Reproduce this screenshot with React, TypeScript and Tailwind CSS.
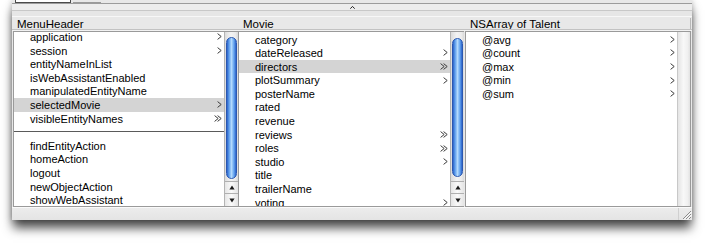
import React from "react";

type Arrow = "one" | "many" | undefined;
type Item = { label?: string; arrow?: Arrow; selected?: boolean; sep?: boolean };

function Chevron({ kind }: { kind: Arrow }) {
  if (kind === "one")
    return (
      <svg width="5" height="7" viewBox="0 0 5 7" className="block">
        <path d="M0.6 0.6 L4.2 3.5 L0.6 6.4" fill="none" stroke="#3a3a3a" strokeWidth="1" />
      </svg>
    );
  if (kind === "many")
    return (
      <svg width="8" height="7" viewBox="0 0 8 7" className="block">
        <path d="M0.6 0.6 L4.2 3.5 L0.6 6.4 M3.6 0.6 L7.2 3.5 L3.6 6.4" fill="none" stroke="#3a3a3a" strokeWidth="1" />
      </svg>
    );
  return null;
}

function Row({ item }: { item: Item }) {
  if (item.sep)
    return (
      <div className="h-[13.6px] flex items-center">
        <div className="h-[1px] w-full bg-[#5a5a5a]" />
      </div>
    );
  return (
    <div
      className={`h-[13.6px] leading-[13.6px] flex items-center justify-between pl-[16px] pr-[2px] whitespace-nowrap ${
        item.selected ? "bg-[#d4d4d4]" : ""
      }`}
    >
      <span className="mt-[2px]">{item.label}</span>
      <Chevron kind={item.arrow} />
    </div>
  );
}

function Scroller({ thumbTop, thumbHeight }: { thumbTop: string; thumbHeight: string }) {
  return (
    <div className="w-[14px] h-full flex flex-col border-l border-[#b4b4b4] bg-[linear-gradient(to_right,#dcdcdc,#f4f4f4_45%,#ececec_80%,#dadada)]">
      <div className={`${thumbTop} ${thumbHeight} mx-auto w-[11px] rounded-full border border-[#2a57b0] bg-[linear-gradient(to_right,#2c62c8,#5b9cec_22%,#b3dafd_50%,#62a2ee_78%,#2c62c8)]`} />
      <div className="flex-1" />
      <div className="h-[12px] border-t border-[#b0b0b0] flex items-center justify-center bg-[linear-gradient(to_right,#e6e6e6,#fafafa_50%,#e4e4e4)]">
        <svg width="6" height="5" viewBox="0 0 6 5"><path d="M3 0.5 L5.6 4.5 L0.4 4.5 Z" fill="#1a1a1a" /></svg>
      </div>
      <div className="h-[13px] border-t border-[#b0b0b0] flex items-center justify-center bg-[linear-gradient(to_right,#e6e6e6,#fafafa_50%,#e4e4e4)]">
        <svg width="6" height="5" viewBox="0 0 6 5"><path d="M0.4 0.5 L5.6 0.5 L3 4.5 Z" fill="#1a1a1a" /></svg>
      </div>
    </div>
  );
}

const col1: Item[] = [
  { label: "application", arrow: "one" },
  { label: "session", arrow: "one" },
  { label: "entityNameInList" },
  { label: "isWebAssistantEnabled" },
  { label: "manipulatedEntityName" },
  { label: "selectedMovie", arrow: "one", selected: true },
  { label: "visibleEntityNames", arrow: "many" },
  { sep: true },
  { label: "findEntityAction" },
  { label: "homeAction" },
  { label: "logout" },
  { label: "newObjectAction" },
  { label: "showWebAssistant" },
];

const col2: Item[] = [
  { label: "category" },
  { label: "dateReleased", arrow: "one" },
  { label: "directors", arrow: "many", selected: true },
  { label: "plotSummary", arrow: "one" },
  { label: "posterName" },
  { label: "rated" },
  { label: "revenue" },
  { label: "reviews", arrow: "many" },
  { label: "roles", arrow: "many" },
  { label: "studio", arrow: "one" },
  { label: "title" },
  { label: "trailerName" },
  { label: "voting", arrow: "one" },
];

const col3: Item[] = [
  { label: "@avg", arrow: "one" },
  { label: "@count", arrow: "one" },
  { label: "@max", arrow: "one" },
  { label: "@min", arrow: "one" },
  { label: "@sum", arrow: "one" },
];

export default function App() {
  return (
    <div className="w-[705px] h-[243px] bg-white overflow-hidden font-['Liberation_Sans',Arial,sans-serif] text-[11px] text-black">
      <div className="ml-[12px] w-[680px] h-[220px] bg-[#e8e8e8] flex flex-col shadow-[0_9px_10px_-1px_rgba(0,0,0,0.7),0_0_6px_rgba(0,0,0,0.25)]">
        {/* clipped tabs at top */}
        <div className="h-[3px] flex pl-[3px] gap-[2px] overflow-hidden">
          <div className="w-[56px] h-[3px] border-x border-b border-[#4a4a4a] bg-white overflow-hidden">
            <div className="-mt-[10px] pl-[4px] leading-[12px] text-[10px] text-[#555]">selected</div>
          </div>
          <div className="w-[28px] h-[3px] border-b border-[#9a9a9a] overflow-hidden">
            <div className="-mt-[10px] pl-[2px] leading-[12px] text-[10px] text-[#777]">sel</div>
          </div>
        </div>
        <div className="h-[1px] bg-[#9c9c9c]" />
        <div className="h-[6px] bg-[#ededed] flex justify-center items-center">
          <svg width="5" height="3" viewBox="0 0 5 3" className="ml-[1px]">
            <path d="M0.3 2.7 L2.5 0.4 L4.7 2.7" fill="none" stroke="#222" strokeWidth="1" />
          </svg>
        </div>
        <div className="h-[1px] bg-[#c8c8c8]" />
        <div className="h-[5px] bg-[#e6e6e6]" />
        <div className="h-[1px] bg-[#f7f7f7]" />
        {/* headers */}
        <div className="h-[12px] flex items-center text-[11.5px] leading-[12px] bg-[#e8e8e8] pl-[1px]">
          <div className="w-[225px] pl-[4px] mt-[1px]">MenuHeader</div>
          <div className="w-[227px] pl-[5px] mt-[1px]">Movie</div>
          <div className="w-[226px] pl-[5px] mt-[1px] border-r border-[#b8b8b8]">NSArray of Talent</div>
        </div>
        <div className="h-[1px] bg-[#c2c2c2]" />
        <div className="h-[1px] bg-[#f2f2f2]" />
        {/* browser columns */}
        <div className="h-[176px] flex pl-[1px]">
          <div className="w-[225px] flex border border-r-0 border-[#9a9a9a]">
            <div className="w-[210px] bg-white overflow-hidden">
              <div className="-mt-[2px]">
                {col1.map((it, i) => (
                  <Row key={i} item={it} />
                ))}
              </div>
            </div>
            <Scroller thumbTop="mt-[5px]" thumbHeight="h-[142px]" />
          </div>
          <div className="w-[226px] flex border border-r-0 border-[#9a9a9a]">
            <div className="w-[211px] bg-white overflow-hidden">
              <div className="pt-[0.5px]">
                {col2.map((it, i) => (
                  <Row key={i} item={it} />
                ))}
              </div>
            </div>
            <Scroller thumbTop="mt-[6px]" thumbHeight="h-[139px]" />
          </div>
          <div className="w-[1px]" />
          <div className="w-[226px] flex border border-[#9a9a9a]">
            <div className="w-[211px] bg-white overflow-hidden">
              <div className="pt-[0.5px]">
                {col3.map((it, i) => (
                  <Row key={i} item={it} />
                ))}
              </div>
            </div>
            <div className="w-[13px] h-full border-l border-[#c8c8c8] bg-[linear-gradient(to_right,#e4e4e4,#f8f8f8_45%,#f0f0f0_80%,#e2e2e2)]" />
          </div>
        </div>
        {/* bottom band */}
        <div className="h-[13px] flex border-t border-[#fafafa] bg-[linear-gradient(to_bottom,#ececec,#e4e4e4)]">
          <div className="flex-1" />
          <div className="w-[14px] h-full flex items-end justify-end border-l border-[#d0d0d0]">
            <svg width="12" height="12" viewBox="0 0 12 12">
              <path d="M11 3 L3 11 M11 6 L6 11 M11 9 L9 11" stroke="#8a8a8a" strokeWidth="1" />
              <path d="M11.8 3.8 L3.8 11.8 M11.8 6.8 L6.8 11.8" stroke="#ffffff" strokeWidth="1" />
            </svg>
          </div>
        </div>
      </div>
    </div>
  );
}
